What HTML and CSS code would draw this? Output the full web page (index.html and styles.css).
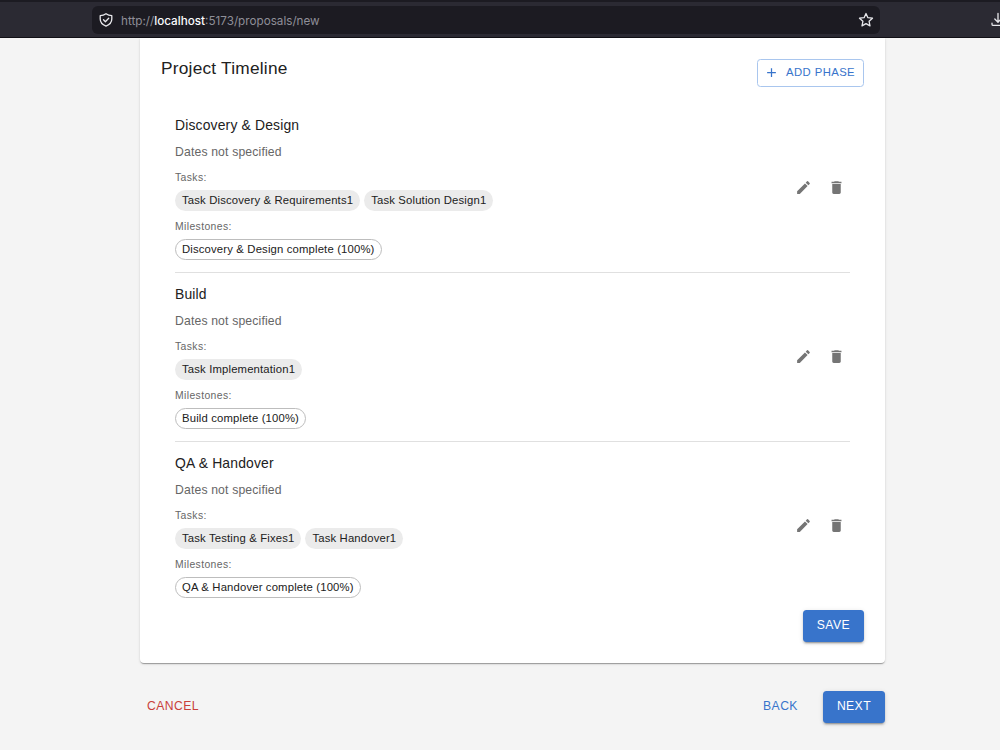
FILE: index.html
```html
<!DOCTYPE html>
<html lang="en">
<head>
  <meta charset="UTF-8" />
  <title>New Proposal</title>
  <meta name="viewport" content="width=device-width, initial-scale=1" />
  <link rel="stylesheet" href="styles.css">
</head>
<body>

  <!-- Shared icons -->
  <svg class="icon-defs" aria-hidden="true">
    <symbol id="icon-edit" viewBox="0 0 24 24">
      <path d="M3 17.25V21h3.75L17.81 9.94l-3.75-3.75L3 17.25zM20.71 7.04c.39-.39.39-1.02 0-1.41l-2.34-2.34a.996.996 0 0 0-1.41 0l-1.83 1.83 3.75 3.75 1.83-1.83z" />
    </symbol>
    <symbol id="icon-delete" viewBox="0 0 24 24">
      <path d="M6 19c0 1.100.9 2 2 2h8c1.100 0 2-.9 2-2V7H6v12zM19 4h-3.500l-1-1h-5l-1 1H5v2h14V4z" />
    </symbol>
  </svg>

  <header class="browser-bar">
    <div class="address">
      <svg class="shield" viewBox="0 0 16 16">
        <path d="M8 1.700C6.400 2.800 4.400 3.500 2.200 3.700v3.400c0 3.300 2.200 5.700 5.800 7.100 3.600-1.400 5.800-3.800 5.800-7.100V3.700C11.600 3.500 9.600 2.800 8 1.700z" />
        <path d="M5.500 7.800l1.900 1.900 3.300-3.400" />
      </svg>
      <span class="url">http://<b>localhost</b>:5173/proposals/new</span>
      <svg class="star" viewBox="0 0 16 16">
        <path d="M8 1.500l1.900 4.200 4.600.5-3.400 3.100.9 4.600L8 11.600l-4 2.300.9-4.600L1.500 6.200l4.600-.5z" />
      </svg>
    </div>
    <svg class="download" viewBox="0 0 16 16">
      <path d="M8 1.500v8.500M4.800 7L8 10.200 11.200 7M2 11.200v1c0 .7.500 1.200 1.200 1.200h9.600c.7 0 1.200-.5 1.200-1.200v-1" />
    </svg>
  </header>

  <main class="page">
    <section class="card">
      <div class="card-header">
        <h1>Project Timeline</h1>
        <button class="btn btn-outlined">
          <svg viewBox="0 0 24 24"><path d="M19 13h-6v6h-2v-6H5v-2h6V5h2v6h6v2z" /></svg>
          ADD PHASE
        </button>
      </div>

      <ul class="phases">
        <li class="phase">
          <div class="phase-info">
            <h2>Discovery &amp; Design</h2>
            <p class="dates">Dates not specified</p>
            <p class="label">Tasks:</p>
            <div class="chips">
              <span class="chip">Task Discovery &amp; Requirements1</span>
              <span class="chip">Task Solution Design1</span>
            </div>
            <p class="label">Milestones:</p>
            <div class="chips">
              <span class="chip chip-outlined">Discovery &amp; Design complete (100%)</span>
            </div>
          </div>
          <div class="phase-actions">
            <button class="icon-btn" aria-label="Edit"><svg><use href="#icon-edit" /></svg></button>
            <button class="icon-btn" aria-label="Delete"><svg><use href="#icon-delete" /></svg></button>
          </div>
        </li>

        <li class="phase">
          <div class="phase-info">
            <h2>Build</h2>
            <p class="dates">Dates not specified</p>
            <p class="label">Tasks:</p>
            <div class="chips">
              <span class="chip">Task Implementation1</span>
            </div>
            <p class="label">Milestones:</p>
            <div class="chips">
              <span class="chip chip-outlined">Build complete (100%)</span>
            </div>
          </div>
          <div class="phase-actions">
            <button class="icon-btn" aria-label="Edit"><svg><use href="#icon-edit" /></svg></button>
            <button class="icon-btn" aria-label="Delete"><svg><use href="#icon-delete" /></svg></button>
          </div>
        </li>

        <li class="phase">
          <div class="phase-info">
            <h2>QA &amp; Handover</h2>
            <p class="dates">Dates not specified</p>
            <p class="label">Tasks:</p>
            <div class="chips">
              <span class="chip">Task Testing &amp; Fixes1</span>
              <span class="chip">Task Handover1</span>
            </div>
            <p class="label">Milestones:</p>
            <div class="chips">
              <span class="chip chip-outlined">QA &amp; Handover complete (100%)</span>
            </div>
          </div>
          <div class="phase-actions">
            <button class="icon-btn" aria-label="Edit"><svg><use href="#icon-edit" /></svg></button>
            <button class="icon-btn" aria-label="Delete"><svg><use href="#icon-delete" /></svg></button>
          </div>
        </li>
      </ul>

      <div class="card-footer">
        <button class="btn btn-contained">SAVE</button>
      </div>
    </section>

    <div class="wizard-actions">
      <button class="btn btn-text btn-cancel">CANCEL</button>
      <div class="wizard-nav">
        <button class="btn btn-text">BACK</button>
        <button class="btn btn-contained">NEXT</button>
      </div>
    </div>
  </main>

</body>
</html>
```
FILE: styles.css
```css
/* Reset and base */
* {
  box-sizing: border-box;
  margin: 0;
  padding: 0;
}
body {
  height: 750px;
  overflow: hidden;
  font-family: "Liberation Sans", Arial, sans-serif;
  background: #f4f4f4;
  color: #212121;
}
button {
  font-family: inherit;
  border: none;
  background: none;
  cursor: pointer;
}
svg {
  display: block;
  flex-shrink: 0;
}
.icon-defs {
  display: none;
}

/* Browser bar */
.browser-bar {
  display: flex;
  align-items: center;
  justify-content: space-between;
  height: 38px;
  padding: 3px 0 2px 92px;
  margin-right: -5px;
  background: #2b2a33;
  border-top: 2px solid #1c1b22;
  border-bottom: 1px solid #111016;
}
.address {
  display: flex;
  align-items: center;
  width: 788px;
  height: 28px;
  padding: 0 6px;
  border-radius: 6px;
  background: #1c1b22;
}
.browser-bar svg {
  width: 16px;
  height: 16px;
  fill: none;
  stroke: #e8e8ec;
  stroke-width: 1.3;
  stroke-linejoin: round;
  stroke-linecap: round;
}
.browser-bar .download {
  margin-right: -1px;
}
.url {
  flex-grow: 1;
  margin-left: 7px;
  padding-top: 2px;
  font-family: Inter, sans-serif;
  font-size: 11.7px;
  color: #8f8f98;
}
.url b {
  font-weight: 500;
  color: #fbfbfe;
}

/* Card */
.page {
  width: 745px;
  margin-left: 140px;
}
.card {
  height: 625px;
  padding: 21px;
  background: #fff;
  border-radius: 0 0 4px 4px;
  box-shadow: 0 2px 1px -1px rgba(0, 0, 0, 0.2), 0 1px 1px rgba(0, 0, 0, 0.14), 0 1px 3px rgba(0, 0, 0, 0.12);
}
.card-header {
  display: flex;
  justify-content: space-between;
  height: 45px;
}
h1 {
  font-size: 17.3px;
  font-weight: 400;
  line-height: 18px;
  letter-spacing: 0.23px;
}

/* Phases */
.phases {
  list-style: none;
  padding: 0 14px;
}
.phase {
  display: flex;
  align-items: center;
  justify-content: space-between;
  height: 169px;
  padding: 11px 5px 12px 0;
  border-bottom: 1px solid #e0e0e0;
}
.phase:last-child {
  border-bottom-color: transparent;
}
.phase-info {
  align-self: flex-start;
}
h2 {
  font-size: 13.9px;
  font-weight: 400;
  line-height: 21px;
  letter-spacing: 0.17px;
}
.dates {
  margin-top: 7px;
  font-size: 12.2px;
  line-height: 19px;
  letter-spacing: 0.16px;
  color: #666;
}
.label {
  margin-top: 7px;
  font-size: 10.4px;
  line-height: 18px;
  letter-spacing: 0.38px;
  color: #666;
}
.chips {
  display: flex;
  gap: 4px;
  margin-top: 3px;
}
.chips + .label {
  margin-top: 7px;
}
.chip {
  height: 21px;
  padding: 0 7px;
  border-radius: 11px;
  background: #ebebeb;
  font-size: 11.3px;
  line-height: 20px;
  letter-spacing: 0.16px;
  white-space: nowrap;
}
.chip-outlined {
  padding: 0 6px;
  line-height: 18px;
  background: #fff;
  border: 1px solid #bdbdbd;
}
.phase-actions {
  display: flex;
  gap: 16px;
}
.icon-btn svg {
  width: 17px;
  height: 17px;
  fill: #757575;
}

/* Buttons */
.btn {
  display: flex;
  align-items: center;
  justify-content: center;
  height: 32px;
  padding: 0 14px 2px;
  border-radius: 3.500px;
  font-size: 12.2px;
  letter-spacing: 0.4px;
  color: #3874cb;
}
.btn-contained {
  background: #3874cb;
  color: #fff;
  box-shadow: 0 3px 1px -2px rgba(0, 0, 0, 0.2), 0 2px 2px rgba(0, 0, 0, 0.14), 0 1px 5px rgba(0, 0, 0, 0.12);
}
.btn-outlined {
  height: 28px;
  padding: 0 8px 2px;
  border: 1px solid #a9c6ee;
  font-size: 11.3px;
}
.btn-outlined svg {
  width: 15px;
  height: 15px;
  margin: 1px 7px 0 -2px;
  fill: #3874cb;
}
.btn-text {
  padding: 0 7px 2px;
}
.btn-cancel {
  color: #c9403a;
}
.card-footer {
  display: flex;
  justify-content: flex-end;
  margin-top: -1px;
}

/* Bottom navigation */
.wizard-actions {
  display: flex;
  justify-content: space-between;
  margin-top: 28px;
}
.wizard-nav {
  display: flex;
  gap: 18px;
}
```
